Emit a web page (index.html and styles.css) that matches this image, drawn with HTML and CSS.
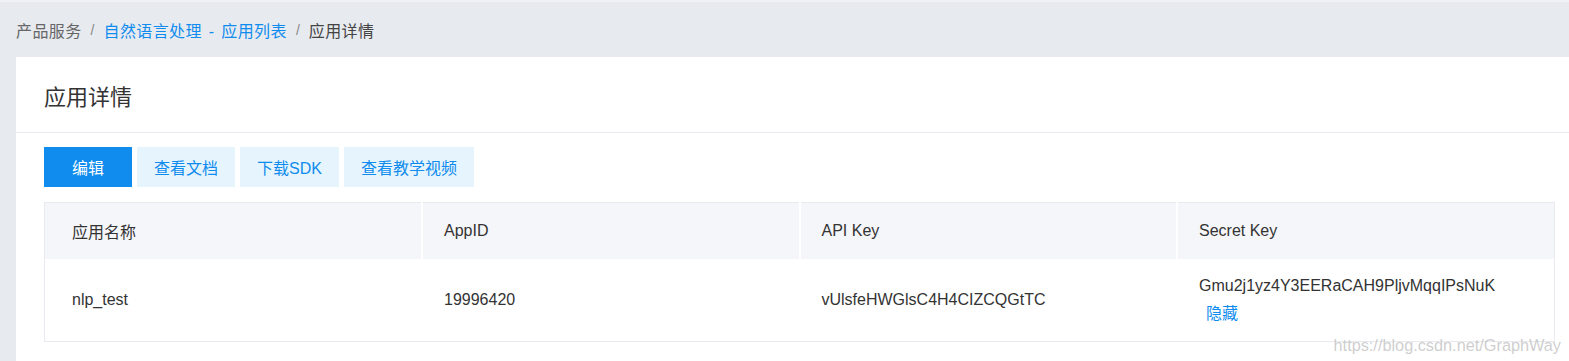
FILE: index.html
```html
<!DOCTYPE html>
<html lang="zh-CN">
<head>
    <meta charset="UTF-8">
    <meta name="viewport" content="width=device-width, initial-scale=1.0">
    <title>应用详情</title>
    <link rel="stylesheet" href="styles.css">
</head>
<body>
    <div class="crumbs">
        <span class="crumb">产品服务</span>
        <span class="sep">/</span>
        <a class="crumb link" href="#">自然语言处理 - 应用列表</a>
        <span class="sep">/</span>
        <span class="crumb current">应用详情</span>
    </div>
    <div class="card">
        <div class="card-head">应用详情</div>
        <div class="card-body">
            <div class="buttons">
                <button class="btn primary">编辑</button>
                <button class="btn">查看文档</button>
                <button class="btn">下载SDK</button>
                <button class="btn">查看教学视频</button>
            </div>
            <table class="detail">
                <thead>
                    <tr>
                        <th>应用名称</th>
                        <th>AppID</th>
                        <th>API Key</th>
                        <th>Secret Key</th>
                    </tr>
                </thead>
                <tbody>
                    <tr>
                        <td>nlp_test</td>
                        <td>19996420</td>
                        <td>vUlsfeHWGlsC4H4CIZCQGtTC</td>
                        <td>
                            <div>Gmu2j1yz4Y3EERaCAH9PljvMqqIPsNuK</div>
                            <a class="toggle" href="#">隐藏</a>
                        </td>
                    </tr>
                </tbody>
            </table>
        </div>
    </div>
    <div class="watermark">https://blog.csdn.net/GraphWay</div>
</body>
</html>
```

FILE: styles.css
```css
* {
    margin: 0px;
    padding: 0px;
    box-sizing: border-box;
}
body {
    width: 100vw;
    height: 100vh;
    background-color: #e7eaef;
    border-top: 2px solid #eff1f4;
    font-family: "Liberation Sans", "Noto Sans CJK SC", sans-serif;
    color: #333;
    position: relative;
    overflow: hidden;
}
.crumbs {
    height: 55px;
    display: flex;
    align-items: center;
    padding-left: 16px;
    font-size: 16px;
}
.crumb {
    color: #666;
    letter-spacing: 0.4px;
}
.link {
    color: #108cee;
    text-decoration: none;
    word-spacing: 2px;
}
.current {
    color: #444;
}
.sep {
    color: #888;
    margin: 0 9px;
    font-size: 14px;
}
.card {
    margin-left: 16px;
    background-color: white;
    height: 320px;
}
.card-head {
    height: 76px;
    display: flex;
    align-items: center;
    padding-left: 28px;
    font-size: 22px;
    color: #333;
    border-bottom: 1px solid #e8eaef;
}
.card-body {
    padding: 14px 14px 0px 28px;
}
.buttons {
    display: flex;
    gap: 5px;
    margin-bottom: 15px;
}
.btn {
    height: 40px;
    min-width: 88px;
    padding: 0px 17px;
    border: none;
    background-color: #e6f4fd;
    color: #108cee;
    font-family: "Liberation Sans", "Noto Sans CJK SC", sans-serif;
    font-size: 16px;
    cursor: pointer;
}
.primary {
    background-color: #108cee;
    color: white;
}
.detail {
    width: 100%;
    table-layout: fixed;
    border-collapse: collapse;
    border: 1px solid #e8eaef;
    font-size: 16px;
}
.detail th {
    height: 56px;
    background-color: #f5f6f9;
    font-weight: normal;
    text-align: left;
    padding-left: 21px;
    border-left: 2px solid white;
}
.detail td {
    height: 83px;
    padding-left: 22px;
    line-height: 28px;
}
.detail th:first-child,
.detail td:first-child {
    padding-left: 27px;
    border-left: none;
}
.toggle {
    color: #108cee;
    text-decoration: none;
    margin-left: 7px;
}
.watermark {
    position: absolute;
    right: 8px;
    bottom: 6px;
    color: rgba(190, 190, 190, 0.75);
    font-size: 16.3px;
}
```
